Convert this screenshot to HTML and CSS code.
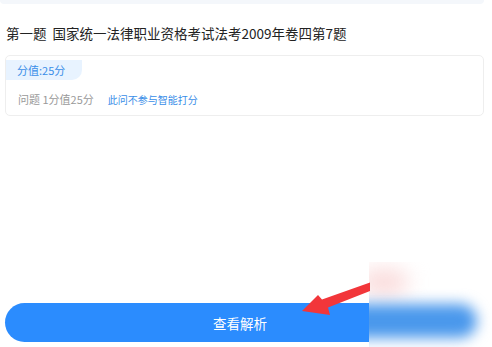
FILE: index.html
```html
<!DOCTYPE html>
<html lang="zh">
<head>
<meta charset="utf-8">
<link rel="stylesheet" href="styles.css">
</head>
<body>
<div class="page">
  <div class="prev-card"></div>
  <h1 class="title">第一题&nbsp;&nbsp;国家统一法律职业资格考试法考2009年卷四第7题</h1>
  <div class="card">
    <div class="badge">分值:25分</div>
    <div class="row">
      <span class="meta">问题 1分值25分</span>
      <span class="note">此问不参与智能打分</span>
    </div>
  </div>
  <div class="spacer"></div>
  <div class="footer">
    <button class="btn">查看解析</button>
  </div>
</div>
<div class="blur-box">
  <div class="blur-red"></div>
  <div class="blur-blue"></div>
</div>
<svg class="arrow" width="492" height="347" viewBox="0 0 492 347">
  <polygon points="302,311 318,295 322,299.5 370,282.5 370,291 328,307.5 330,315" fill="#f2363a"/>
</svg>
</body>
</html>
```

FILE: styles.css
```css
html, body {
  margin: 0;
  padding: 0;
  background: #fff;
}
body {
  width: 492px;
  height: 347px;
  overflow: hidden;
  position: relative;
  font-family: "Noto Sans CJK SC", "Noto Sans", sans-serif;
}
.page {
  height: 347px;
  display: flex;
  flex-direction: column;
  box-sizing: border-box;
  padding: 0 0 5px 0;
}
.prev-card {
  height: 4px;
  width: 484px;
  background: #f4f7fb;
  border-radius: 0 0 6px 6px;
}
.title {
  margin: 19px 0 0 6px;
  font-size: 13.5px;
  line-height: 20px;
  font-weight: 400;
  color: #222;
  white-space: nowrap;
}
.card {
  margin: 12px 0 0 5px;
  width: 479px;
  height: 61px;
  box-sizing: border-box;
  border: 1px solid #eeeeee;
  border-radius: 5px;
  overflow: hidden;
}
.badge {
  display: inline-block;
  height: 20px;
  line-height: 20px;
  padding: 0 17px 0 11px;
  font-size: 11px;
  color: #3a8ee8;
  background: #e8f3ff;
  border-radius: 0 0 10px 0;
}
.row {
  display: flex;
  align-items: center;
  gap: 14px;
  margin: 9px 0 0 12px;
  height: 20px;
}
.meta {
  font-size: 11px;
  color: #9a9a9a;
}
.note {
  font-size: 10px;
  color: #3a8ee8;
}
.spacer {
  flex: 1;
}
.footer {
  padding: 0 17px 0 5px;
}
.btn {
  display: block;
  width: 100%;
  height: 39px;
  border: none;
  border-radius: 20px;
  background: #2b8cfe;
  color: #fff;
  font-family: "Noto Sans CJK SC", "Noto Sans", sans-serif;
  font-size: 13.5px;
  padding: 0;
}
.blur-box {
  position: absolute;
  left: 369px;
  top: 262px;
  width: 123px;
  height: 85px;
  background: #fff;
  overflow: hidden;
}
.blur-red {
  position: absolute;
  left: -10px;
  top: 6px;
  width: 50px;
  height: 28px;
  border-radius: 50%;
  background: #fadcdc;
  filter: blur(10px);
}
.blur-blue {
  position: absolute;
  left: -30px;
  top: 42px;
  width: 138px;
  height: 34px;
  border-radius: 17px;
  background: #4a98ec;
  filter: blur(7px);
}
.arrow {
  position: absolute;
  left: 0;
  top: 0;
  pointer-events: none;
}
```
